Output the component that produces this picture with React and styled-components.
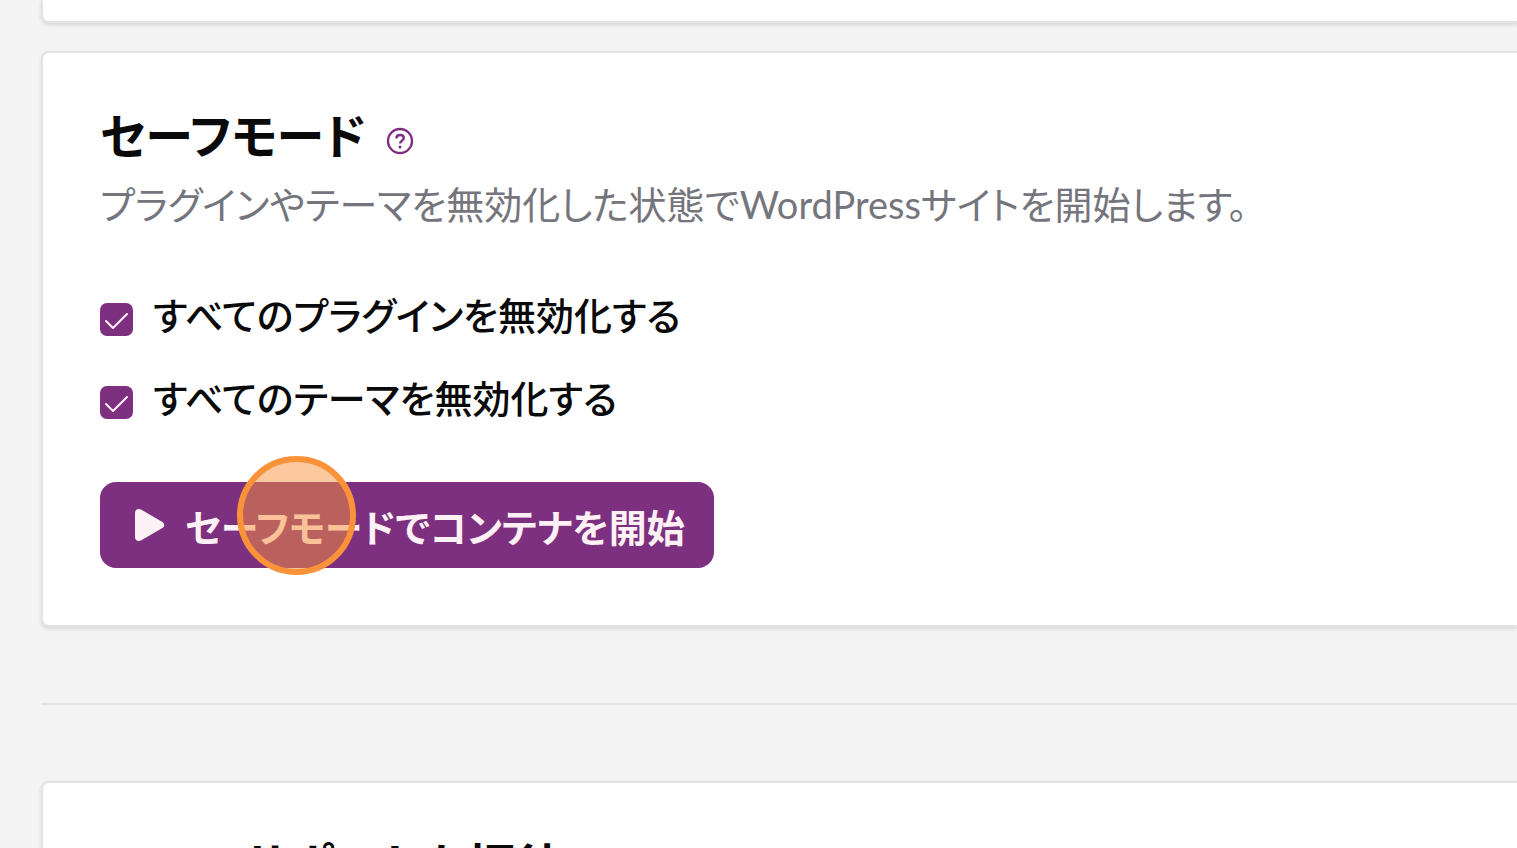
import styled, { createGlobalStyle } from "styled-components"

const GlobalStyle = createGlobalStyle`
* {
  box-sizing: border-box;
}
body {
  margin: 0;
  background: #f4f4f4;
  color: #0a0a0a;
  font-family: Lato, "Noto Sans CJK JP", sans-serif;
  font-feature-settings: "palt";
}
`

const Page = styled.main`
height: 100vh;
overflow: hidden;
padding-left: 41px;
`

const Card = styled.section`
padding: 48px 57px 57px;
background: #fff;
border: 2px solid #e3e3e3;
border-right: 0;
border-radius: 8px 0 0 8px;
box-shadow: 0 2px 4px rgba(0, 0, 0, .12);
`

const CardEnd = styled(Card)`
height: 23px;
padding: 0;
margin-bottom: 28px;
border-top: 0;
border-radius: 0 0 0 8px;
`

const TitleRow = styled.div`
display: flex;
align-items: center;
gap: 20px;
`

const Title = styled.h2`
margin: 0;
font-size: 48px;
line-height: 70px;
font-weight: 700;
white-space: nowrap;
`

const HelpButton = styled.button`
display: flex;
margin-top: 10px;
padding: 0;
border: 0;
background: none;
color: #7d307f;
cursor: pointer;
`

const Description = styled.p`
margin: 5px 0 55px;
color: #75757d;
font-size: 38px;
line-height: 56px;
`

const Options = styled.div`
display: grid;
gap: 27px;
margin-bottom: 56px;
`

const Option = styled.label`
display: flex;
align-items: center;
gap: 20px;
font-size: 38px;
line-height: 56px;
font-weight: 500;
cursor: pointer;
`

const Check = styled.input`
appearance: none;
width: 33px;
height: 33px;
margin: 8px 0 0;
border-radius: 7px;
background: #fff;
border: 2px solid #7d307f;

&:checked {
  border: 0;
  background: #7d307f url("data:image/svg+xml,%3Csvg xmlns='http://www.w3.org/2000/svg' viewBox='0 0 33 33'%3E%3Cpath d='M6 18l7 7L27 11' fill='none' stroke='%23fff0f5' stroke-width='2' stroke-linecap='round' stroke-linejoin='round'/%3E%3C/svg%3E");
}
`

const StartButton = styled.button`
position: relative;
display: flex;
align-items: center;
gap: 20px;
height: 86px;
padding: 0 29px 0 35px;
border: 0;
border-radius: 16px;
background: #7d307f;
color: #fdf1f5;
font: inherit;
font-feature-settings: inherit;
font-size: 38px;
font-weight: 700;
white-space: nowrap;
cursor: pointer;
`

const ClickMarker = styled.span`
position: absolute;
left: 137px;
top: -26px;
width: 119px;
height: 119px;
border: 6px solid #fa923a;
border-radius: 50%;
background: rgba(250, 146, 60, .5);
`

const Divider = styled.hr`
height: 2px;
margin: 76px 0;
border: 0;
background: #e3e3e3;
`

const HelpIcon = () => (
  <svg width="28" height="28" viewBox="0 0 28 28" fill="none" stroke="currentColor" aria-hidden="true">
    <circle cx="14" cy="14" r="12" strokeWidth="2.4" />
    <path d="M10.3 11.4C10.5 9.2 12 8 14.1 8c2.2 0 3.7 1.3 3.7 3.1 0 2.6-3.7 2.7-3.7 5.4" strokeWidth="2.4" />
    <circle cx="14" cy="20" r="1.5" fill="currentColor" stroke="none" />
  </svg>
)

const PlayIcon = () => (
  <svg width="30" height="34" viewBox="0 0 30 34" fill="currentColor" aria-hidden="true">
    <path d="M0 5C0 1.4 3.4 0 6.4 1.8L26.6 13.4c3.6 2.1 3.6 5.1 0 7.2L6.4 32.2C3.4 34 0 32.6 0 29z" />
  </svg>
)

const OPTIONS = [
  { id: "plugins", label: "すべてのプラグインを無効化する" },
  { id: "themes", label: "すべてのテーマを無効化する" },
]

const App = () => {
  return (
    <>
      <GlobalStyle />
      <Page lang="ja">
        <CardEnd />

        <Card>
          <TitleRow>
            <Title>セーフモード</Title>
            <HelpButton type="button" aria-label="ヘルプ">
              <HelpIcon />
            </HelpButton>
          </TitleRow>
          <Description>プラグインやテーマを無効化した状態でWordPressサイトを開始します。</Description>

          <Options>
            {OPTIONS.map((option) => (
              <Option key={option.id} htmlFor={option.id}>
                <Check type="checkbox" id={option.id} defaultChecked />
                {option.label}
              </Option>
            ))}
          </Options>

          <StartButton type="button">
            <PlayIcon />
            セーフモードでコンテナを開始
            <ClickMarker />
          </StartButton>
        </Card>

        <Divider />

        <Card>
          <Title>Shifterサポートを招待</Title>
        </Card>
      </Page>
    </>
  )
}

export default App
